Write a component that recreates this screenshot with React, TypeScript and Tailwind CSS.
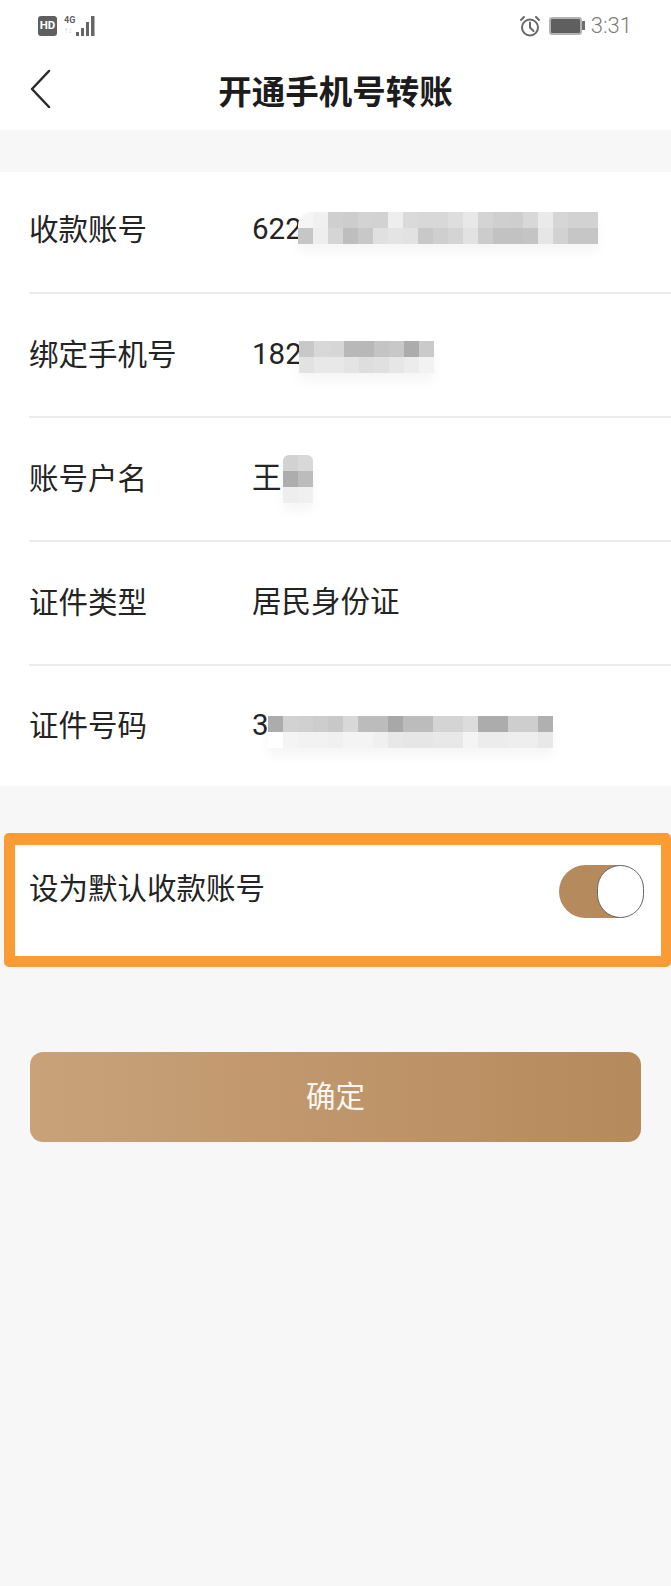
const fontStack = "font-['Roboto','Noto_Sans_CJK_SC',sans-serif]";

// Masked values: each inner array is one row of the pixelated block.
const accountCells = [
  ["#f5f5f5", "#f0f0f0", "#cfcfcf", "#cdcdcd", "#d3d3d3", "#d2d2d2", "#eeeeee", "#dadada", "#d8d8d8", "#d8d8d8", "#dedede", "#e8e8e8", "#d4d4d4", "#cfcfcf", "#cecece", "#d8d8d8", "#eaeaea", "#d6d6d6", "#d2d2d2", "#d2d2d2"],
  ["#c6c6c6", "#eeeeee", "#d5d5d5", "#bebebe", "#c8c8c8", "#e0e0e0", "#e4e4e4", "#e2e2e2", "#c8c8c8", "#cfcfcf", "#d4d4d4", "#e2e2e2", "#cccccc", "#c2c2c2", "#c2c2c2", "#c4c4c4", "#e6e6e6", "#d2d2d2", "#c6c6c6", "#c6c6c6"],
];
const phoneCells = [
  ["#c8c8c8", "#d8d8d8", "#d6d6d6", "#b8b8b8", "#b8b8b8", "#c4c4c4", "#c8c8c8", "#acacac", "#cacaca"],
  ["#e2e2e2", "#e8e8e8", "#e8e8e8", "#e4e4e4", "#dedede", "#e0e0e0", "#e6e6e6", "#ececec", "#f2f2f2"],
];
const nameCells = [
  ["#d2d2d2", "#d8d8d8"],
  ["#adadad", "#bcbcbc"],
  ["#eeeeee", "#f0f0f0"],
];
const idCells = [
  ["#acacac", "#d2d2d2", "#d0d0d0", "#cdcdcd", "#c8c8c8", "#d8d8d8", "#bcbcbc", "#bcbcbc", "#a8a8a8", "#bcbcbc", "#bcbcbc", "#d4d4d4", "#d4d4d4", "#dcdcdc", "#acacac", "#acacac", "#cecece", "#cecece", "#b0b0b0"],
  ["#ffffff", "#f4f4f4", "#f2f2f2", "#f2f2f2", "#f0f0f0", "#f4f4f4", "#f4f4f4", "#f0f0f0", "#e8e8e8", "#e6e6e6", "#e6e6e6", "#e8e8e8", "#e8e8e8", "#f4f4f4", "#ececec", "#ececec", "#eeeeee", "#eeeeee", "#e8e8e8"],
];

function Mosaic({ cells, className }: { cells: string[][]; className: string }) {
  return (
    <div className={`flex flex-col shrink-0 shadow-[0_8px_12px_rgba(0,0,0,0.04)] ${className}`}>
      {cells.map((row, r) => (
        <div key={r} className="flex">
          {row.map((color, c) => (
            <div key={c} className="w-[15px] h-[16px]" style={{ backgroundColor: color }} />
          ))}
        </div>
      ))}
    </div>
  );
}

function Row({
  label,
  value,
  className,
  children,
}: {
  label: string;
  value: string;
  className: string;
  children?: React.ReactNode;
}) {
  return (
    <div className={`flex items-center ${className}`}>
      <div className="w-[223px] shrink-0 text-[29.5px] text-[#242424]">{label}</div>
      <div className="text-[29.5px] text-[#242424] leading-none">{value}</div>
      {children}
    </div>
  );
}

function StatusBar() {
  return (
    <div className="h-[50px] flex items-center justify-between pl-[38px] pr-[39px] pt-[1px]">
      <div className="flex items-center">
        <span className="w-[19px] h-[20px] bg-[#5f5f5f] rounded-[3px] flex items-center justify-center text-[11.5px] font-bold text-white font-['Roboto',sans-serif]">
          HD
        </span>
        <div className="ml-[7px] flex flex-col w-[11px] leading-none font-['Roboto',sans-serif] text-[#5f5f5f]">
          <span className="text-[9px] font-bold">4G</span>
          <span className="text-[8px] mt-[2px] text-[#c4c4c4]">↑↓</span>
        </div>
        <svg width="22" height="22" viewBox="0 0 22 22" fill="#666666">
          <rect x="1" y="17" width="3" height="4" />
          <rect x="6" y="13" width="3" height="8" />
          <rect x="11" y="7" width="3" height="14" />
          <rect x="16" y="1" width="3.5" height="20" />
        </svg>
      </div>
      <div className="flex items-center">
        {/* Alarm indicator: round dial, two hands, two short ears */}
        <svg width="22" height="24" viewBox="0 0 22 24" fill="none" stroke="#686868" strokeWidth="2" strokeLinecap="round">
          <circle cx="11" cy="13.5" r="8" />
          <path d="M11 8.5 V13.5 L14.5 17" />
          <path d="M2 6 L5 3" />
          <path d="M20 6 L17 3" />
        </svg>
        <div className="ml-[8px] w-[33px] h-[18px] rounded-[3px] border-[2px] border-[#b4b4b4] bg-[#5f5f5f]" />
        <div className="w-[3px] h-[9px] bg-[#6f6f6f]" />
        <span className="ml-[6px] text-[22px] font-light text-[#7c7c7c] leading-none font-['Roboto',sans-serif]">3:31</span>
      </div>
    </div>
  );
}

export default function App() {
  return (
    <div className={`min-h-[1586px] bg-[#f7f7f7] ${fontStack}`}>
      <header className="bg-white h-[130px]">
        <StatusBar />
        <div className="relative h-[80px] flex items-center justify-center pt-[6px]">
          <svg
            width="22"
            height="40"
            viewBox="0 0 22 40"
            fill="none"
            stroke="#2a2a2a"
            strokeWidth="2.5"
            strokeLinecap="round"
            strokeLinejoin="round"
            className="absolute left-[30px] top-[19px]"
          >
            <path d="M19 2 L2 20 L19 38" />
          </svg>
          <h1 className="text-[33.5px] font-bold text-[#1c1c1c] leading-none">开通手机号转账</h1>
        </div>
      </header>

      <section className="mt-[42px] bg-white pl-[29px]">
        <Row label="收款账号" value="622" className="h-[122px] pb-[4px] border-b-2 border-[#ececec]">
          <Mosaic cells={accountCells} className="-ml-[4px] mb-[4px] rounded-tl-[14px] overflow-hidden" />
        </Row>
        <Row label="绑定手机号" value="182" className="h-[124px] border-b-2 border-[#ececec]">
          <Mosaic cells={phoneCells} className="-ml-[3px] mt-[4px]" />
        </Row>
        <Row label="账号户名" value="王" className="h-[124px] border-b-2 border-[#ececec]">
          <Mosaic cells={nameCells} className="ml-[1px] rounded-t-[6px] overflow-hidden" />
        </Row>
        <Row label="证件类型" value="居民身份证" className="h-[124px] border-b-2 border-[#ececec]" />
        <Row label="证件号码" value="3" className="h-[120px]">
          <Mosaic cells={idCells} className="-ml-[1px] mt-[11px]" />
        </Row>
      </section>

      <section className="mt-[47px] ml-[4px] h-[134px] bg-white border-[11px] border-t-[12px] border-r-[10px] border-[#fb9b33] rounded-[5px] flex items-start justify-between pl-[14px] pr-[17px]">
        <span className="text-[29.5px] text-[#242424] leading-none mt-[30px]">设为默认收款账号</span>
        <div className="mt-[20px] w-[85px] h-[53px] rounded-full bg-[#b58a5c] flex justify-end">
          <div className="w-[47px] h-[53px] rounded-full bg-white border border-[#666666]" />
        </div>
      </section>

      <button className="mt-[85px] ml-[30px] w-[611px] h-[90px] rounded-[13px] bg-gradient-to-r from-[#c9a27a] to-[#b58a5c] text-[29.5px] text-[#fbf7f0] flex items-center justify-center">
        确定
      </button>
    </div>
  );
}
